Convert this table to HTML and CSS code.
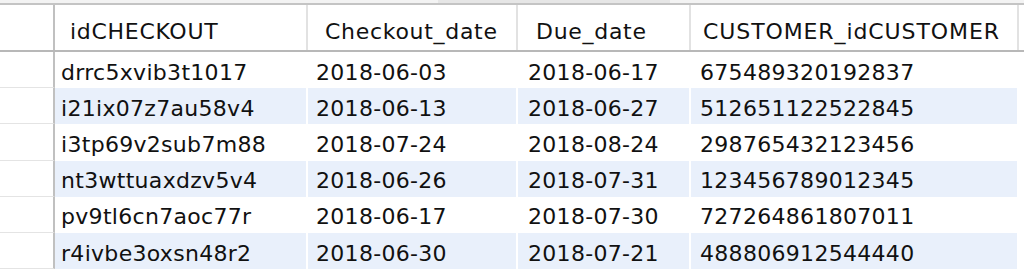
FILE: index.html
```html
<!DOCTYPE html>
<html>
<head>
<meta charset="utf-8">
<link rel="stylesheet" href="styles.css">
</head>
<body>
<div class="topbar"><div class="tab"></div></div>
<div class="grid">
  <div class="row head">
    <div class="gut"></div>
    <div class="cell c1">idCHECKOUT</div>
    <div class="cell c2">Checkout_date</div>
    <div class="cell c3">Due_date</div>
    <div class="cell c4">CUSTOMER_idCUSTOMER</div>
  </div>
  <div class="row">
    <div class="gut"></div>
    <div class="cell c1">drrc5xvib3t1017</div>
    <div class="cell c2">2018-06-03</div>
    <div class="cell c3">2018-06-17</div>
    <div class="cell c4">675489320192837</div>
  </div>
  <div class="row alt">
    <div class="gut"></div>
    <div class="cell c1">i21ix07z7au58v4</div>
    <div class="cell c2">2018-06-13</div>
    <div class="cell c3">2018-06-27</div>
    <div class="cell c4">512651122522845</div>
  </div>
  <div class="row">
    <div class="gut"></div>
    <div class="cell c1">i3tp69v2sub7m88</div>
    <div class="cell c2">2018-07-24</div>
    <div class="cell c3">2018-08-24</div>
    <div class="cell c4">298765432123456</div>
  </div>
  <div class="row alt">
    <div class="gut"></div>
    <div class="cell c1">nt3wttuaxdzv5v4</div>
    <div class="cell c2">2018-06-26</div>
    <div class="cell c3">2018-07-31</div>
    <div class="cell c4">123456789012345</div>
  </div>
  <div class="row">
    <div class="gut"></div>
    <div class="cell c1">pv9tl6cn7aoc77r</div>
    <div class="cell c2">2018-06-17</div>
    <div class="cell c3">2018-07-30</div>
    <div class="cell c4">727264861807011</div>
  </div>
  <div class="row alt">
    <div class="gut"></div>
    <div class="cell c1">r4ivbe3oxsn48r2</div>
    <div class="cell c2">2018-06-30</div>
    <div class="cell c3">2018-07-21</div>
    <div class="cell c4">488806912544440</div>
  </div>
</div>
</body>
</html>
```
FILE: styles.css
```css
html, body {
  margin: 0;
  padding: 0;
  background: #ffffff;
}
body {
  font-family: "DejaVu Sans", Verdana, sans-serif;
  font-size: 22px;
  color: #111111;
  overflow: hidden;
}
.topbar {
  height: 3px;
  background: #f3f3f3;
  border-bottom: 2px solid #c4c4c4;
  display: flex;
  padding-left: 438px;
}
.tab {
  width: 232px;
  background: #e6e6e6;
}
.grid {
  display: flex;
  flex-direction: column;
}
.row {
  display: grid;
  grid-template-columns: 55px 253px 210px 173px 328px 1fr;
  height: 36.2px;
}
.gut {
  border-right: 2px solid #c0c0c0;
  border-bottom: 1px solid #e4e4e4;
  box-sizing: border-box;
}
.cell {
  box-sizing: border-box;
  display: flex;
  align-items: center;
  padding: 4px 0 0 6px;
  border-right: 2px solid #ffffff;
  white-space: nowrap;
  overflow: hidden;
  letter-spacing: 0.3px;
}
.c2 { padding-left: 8px; }
.c3 { padding-left: 10px; }
.c4 { padding-left: 9px; }
.alt .cell {
  background: #e9f0fb;
}
.head {
  height: 47px;
  border-bottom: 2px solid #b8b8b8;
  box-sizing: border-box;
}
.head .gut {
  border-bottom: none;
}
.head .cell {
  border-right: 2px solid #e2e2e2;
  padding-top: 7px;
  padding-left: 15px;
  letter-spacing: 0.7px;
}
.head .c2 { padding-left: 17px; }
.head .c3 { padding-left: 18px; }
.head .c4 { padding-left: 12px; letter-spacing: 0.9px; }
```
